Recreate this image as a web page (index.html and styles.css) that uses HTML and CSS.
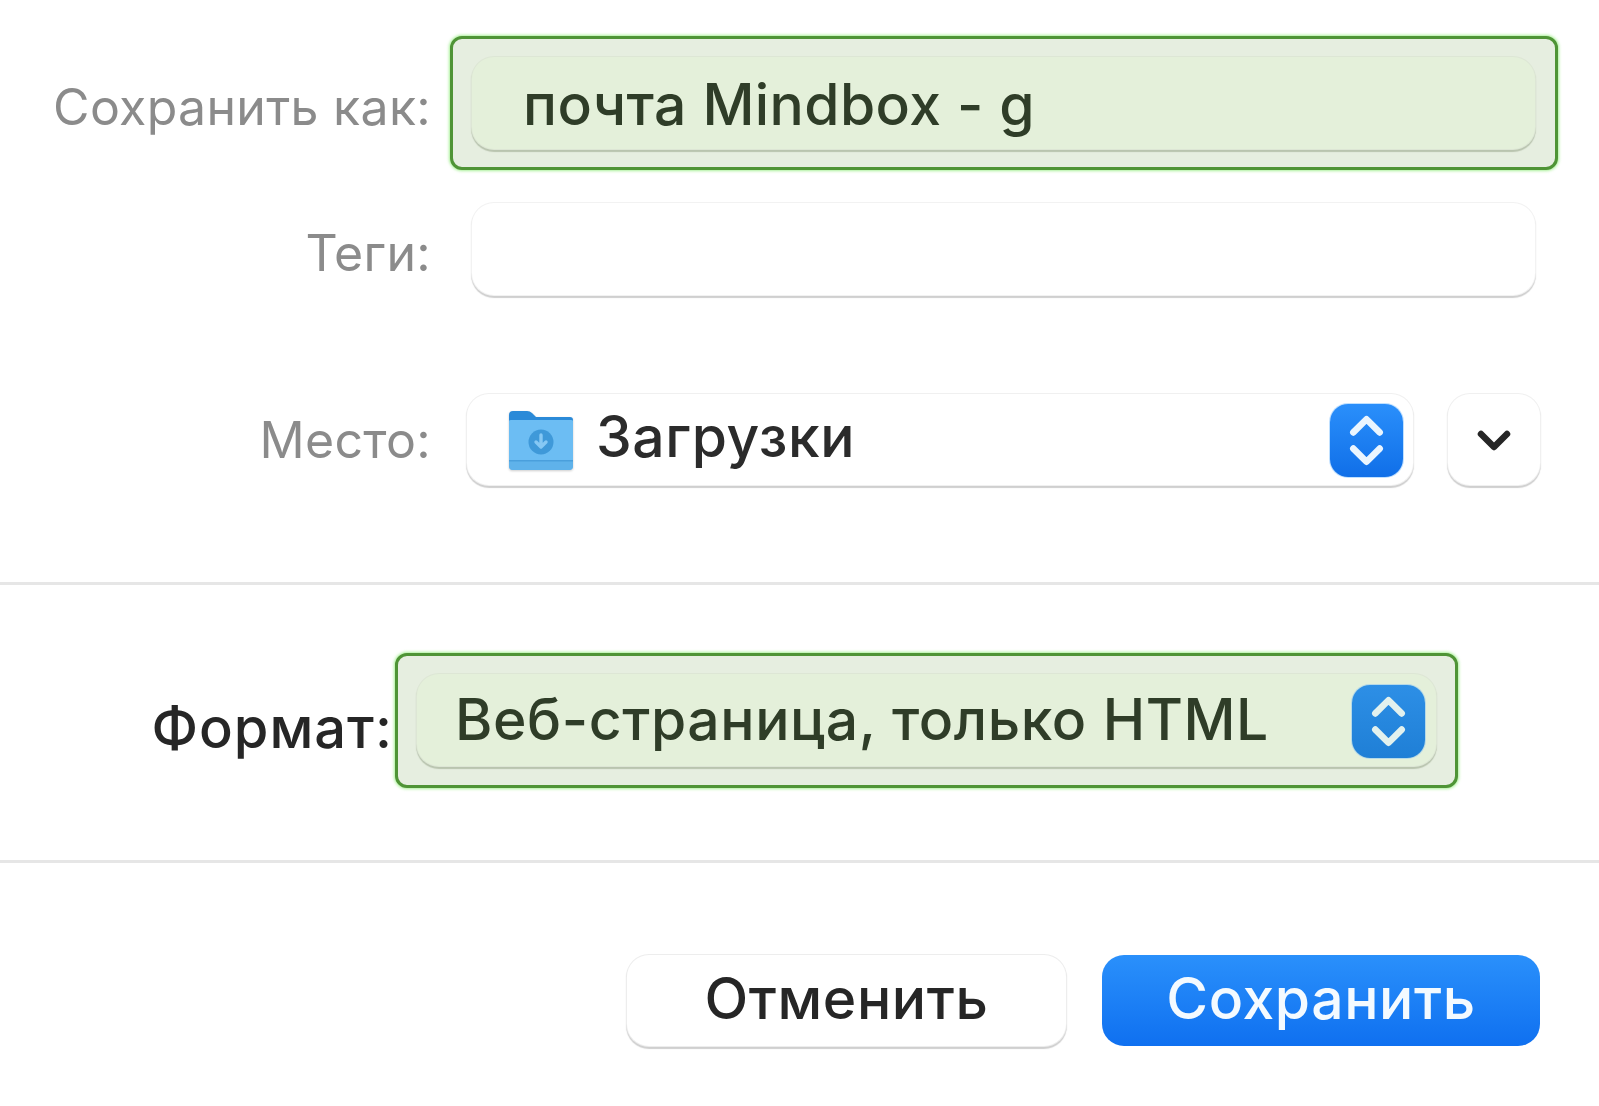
FILE: index.html
```html
<!DOCTYPE html>
<html lang="ru">
<head>
<meta charset="utf-8">
<title>Сохранить как</title>
<link rel="stylesheet" href="styles.css">
</head>
<body>
<main class="sheet">
  <section class="names">
    <div class="row row-name">
      <label class="label label-low">Сохранить как:</label>
      <div class="highlight highlight-name">
        <div class="field field-green"><span class="value">почта Mindbox - g</span></div>
      </div>
    </div>
    <div class="row row-tags">
      <label class="label label-low">Теги:</label>
      <div class="field field-white"></div>
    </div>
    <div class="row row-place">
      <label class="label">Место:</label>
      <div class="select">
        <svg class="folder" viewBox="0 0 66 62" aria-hidden="true">
          <path d="M1 6Q1 2 5 2H19Q22 2 24 4L28 8H62Q65 8 65 11V22H1Z" fill="#2b8ad8"/>
          <path d="M1 12Q1 11 3 11H63Q65 11 65 12V57Q65 61 61 61H5Q1 61 1 57Z" fill="#6cbdf3"/>
          <path d="M1 52H65V57Q65 61 61 61H5Q1 61 1 57Z" fill="#5fb2ea"/>
          <rect x="1" y="51" width="64" height="1.5" fill="#4a9fdc"/>
          <circle cx="33" cy="33" r="12.5" fill="#3f99d9"/>
          <path d="M33 26V37M28 33L33 38L38 33" fill="none" stroke="#86c8f4" stroke-width="3.4" stroke-linecap="round" stroke-linejoin="round"/>
        </svg>
        <span class="select-text">Загрузки</span>
        <span class="stepper">
          <svg viewBox="0 0 72 72" aria-hidden="true"><path d="M23 28L36 15L49 28M23 44L36 57L49 44" fill="none" stroke="#eaf5ff" stroke-width="6.5" stroke-linecap="round" stroke-linejoin="round"/></svg>
        </span>
      </div>
      <div class="disclosure">
        <svg viewBox="0 0 40 30" aria-hidden="true"><path d="M7 8L20 21L33 8" fill="none" stroke="#262626" stroke-width="6.5" stroke-linecap="round" stroke-linejoin="round"/></svg>
      </div>
    </div>
  </section>
  <hr class="rule">
  <section class="format">
    <label class="label label-dark">Формат:</label>
    <div class="highlight highlight-format">
      <div class="select select-green">
        <span class="select-text select-text-green">Веб-страница, только HTML</span>
        <span class="stepper stepper-muted">
          <svg viewBox="0 0 72 72" aria-hidden="true"><path d="M23 28L36 15L49 28M23 44L36 57L49 44" fill="none" stroke="#e2f1ee" stroke-width="6.5" stroke-linecap="round" stroke-linejoin="round"/></svg>
        </span>
      </div>
    </div>
  </section>
  <hr class="rule rule-second">
  <footer class="actions">
    <button class="btn btn-cancel" type="button">Отменить</button>
    <button class="btn btn-save" type="button">Сохранить</button>
  </footer>
</main>
</body>
</html>
```
FILE: styles.css
```css
* { box-sizing: border-box; }
html, body { margin: 0; background: #fff; }
body { width: 1599px; height: 1106px; overflow: hidden; font-family: Inter, "Liberation Sans", sans-serif; }
.sheet { height: 1106px; padding-top: 36px; filter: blur(0.7px); }

.row { display: flex; align-items: center; }
.label { width: 431px; margin-right: -2px; flex: none; text-align: right; font-size: 50px; letter-spacing: .3px; line-height: 56px; color: #8b8b8b; white-space: nowrap; }
.label-low { position: relative; top: 4px; }
.label-dark { width: 393px; margin-right: -1px; font-size: 56px; font-weight: 500; letter-spacing: 1px; color: #262626; }

.highlight { background: #e6eee0; border: 3px solid #4f9436; border-radius: 12px; box-shadow: 0 0 3px 1px rgba(110, 230, 80, .6); }
.highlight-name { margin-left: 21px; width: 1108px; height: 134px; padding: 18px 20px 18px 19px; }
.highlight-format { margin-left: 3px; width: 1063px; height: 135px; padding: 18px 19px 0; }

.field { height: 92px; border-radius: 22px; display: flex; align-items: center; }
.field-green { background: #e4f0da; box-shadow: 0 0 0 1px #dde6d5, 0 2px 1px 1px #b9c4af; padding-left: 51px; }
.field-white { background: #fff; box-shadow: 0 0 0 1px #f2f2f2, 0 2px 1px 1px #cfcfcf; width: 1063px; margin-left: 43px; }
.value { font-size: 57px; font-weight: 500; letter-spacing: .4px; line-height: 60px; color: #2f3d28; position: relative; top: 2px; white-space: nowrap; }

.row-tags { margin-top: 33px; }
.row-place { margin-top: 99px; }

.select { height: 91px; border-radius: 22px; display: flex; align-items: center; background: #fff; box-shadow: 0 0 0 1px #f0f0f0, 0 2px 1px 1px #cfcfcf; }
.row-place .select { width: 946px; margin-left: 38px; padding: 1px 10px 0 41px; }
.folder { width: 66px; height: 62px; flex: none; filter: drop-shadow(0 1px 1px rgba(0, 0, 0, .2)); }
.select-text { font-size: 57px; font-weight: 500; letter-spacing: .6px; line-height: 60px; color: #2b2b2b; margin-left: 22px; white-space: nowrap; flex: 1; position: relative; top: -3px; }
.stepper { width: 73px; height: 73px; flex: none; border-radius: 18px; background: linear-gradient(#2a8ffb, #106fe8); box-shadow: 0 0 0 1px #bfe0ff; }
.stepper svg { display: block; width: 73px; height: 73px; }
.disclosure { width: 92px; height: 91px; margin-left: 35px; padding-top: 3px; border-radius: 22px; background: #fff; box-shadow: 0 0 0 1px #f0f0f0, 0 2px 1px 1px #cfcfcf; display: flex; align-items: center; justify-content: center; }
.disclosure svg { width: 40px; height: 30px; display: block; }

.rule { height: 3px; margin: 0; border: 0; background: #e6e6e6; }
.names + .rule { margin-top: 97px; }

.format { display: flex; align-items: center; margin-top: 68px; }
.format .label { position: relative; top: 7px; }
.select-green { background: #e4f0da; height: 92px; box-shadow: 0 0 0 1px #dde6d5, 0 2px 1px 1px #b9c4af; padding: 2px 11px 0 38px; }
.select-text-green { margin-left: 0; color: #2f3d28; top: -1px; }
.stepper-muted { background: linear-gradient(#2d8fe6, #1f7fd6); box-shadow: 0 0 0 1px #b5d9e8; }

.rule-second { margin-top: 72px; }

.actions { display: flex; justify-content: flex-end; gap: 36px; margin-top: 92px; padding-right: 59px; }
.btn { height: 91px; border: 0; border-radius: 22px; font-family: inherit; font-size: 57px; font-weight: 500; letter-spacing: .6px; padding: 0 0 4px; }
.btn-cancel { width: 439px; background: #fff; color: #262626; box-shadow: 0 0 0 1px #ededed, 0 2px 1px 1px #cfcfcf; }
.btn-save { width: 438px; background: linear-gradient(#2a90fb, #0f70f0); color: #f4faff; }
```
